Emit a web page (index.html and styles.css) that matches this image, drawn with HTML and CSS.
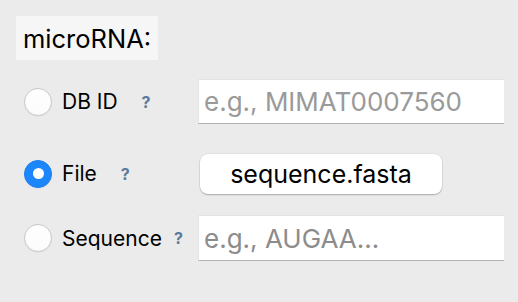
FILE: index.html
```html
<!DOCTYPE html>
<html>
<head>
<meta charset="utf-8">
<link rel="stylesheet" href="styles.css">
</head>
<body>
<div class="panel">
  <div class="title">microRNA:</div>
  <div class="row row-db">
    <div class="choice">
      <span class="radio"></span>
      <span class="label">DB ID</span>
      <span class="help">?</span>
    </div>
    <div class="input"><span class="placeholder">e.g., MIMAT0007560</span></div>
  </div>
  <div class="row row-file">
    <div class="choice">
      <span class="radio checked"></span>
      <span class="label">File</span>
      <span class="help">?</span>
    </div>
    <div class="button">sequence.fasta</div>
  </div>
  <div class="row row-seq">
    <div class="choice">
      <span class="radio"></span>
      <span class="label">Sequence</span>
      <span class="help tight">?</span>
    </div>
    <div class="input"><span class="placeholder">e.g., AUGAA...</span></div>
  </div>
</div>
</body>
</html>
```
FILE: styles.css
```css
html, body {
  margin: 0;
  padding: 0;
  background: #ebebeb;
}
body {
  width: 518px;
  height: 302px;
  overflow: hidden;
  font-family: Inter, "Liberation Sans", sans-serif;
  color: #000;
}
.panel {
  padding: 16px 0 0 0;
  display: flex;
  flex-direction: column;
}
.title {
  margin-left: 16px;
  width: 142px;
  height: 44px;
  box-sizing: border-box;
  padding-left: 7px;
  background: #f6f6f6;
  font-size: 25.5px;
  display: flex;
  align-items: center;
}
.row {
  display: flex;
  align-items: center;
}
.row-db { margin-top: 19px; height: 45px; }
.row-file { margin-top: 29px; height: 41px; }
.row-seq { margin-top: 21px; height: 46px; }
.choice {
  width: 174px;
  margin-left: 24px;
  display: flex;
  align-items: center;
}
.radio {
  width: 28px;
  height: 28px;
  box-sizing: border-box;
  border-radius: 50%;
  background: linear-gradient(#ffffff, #fbfbfb);
  border: 1px solid #c9c9c9;
  box-shadow: 0 0.5px 1px rgba(0,0,0,0.08);
  flex: none;
  display: flex;
  align-items: center;
  justify-content: center;
}
.radio.checked {
  background: #1c86fb;
  border: 1px solid #1a7ef0;
}
.radio.checked::after {
  content: "";
  width: 11px;
  height: 11px;
  border-radius: 50%;
  background: #fff;
}
.label {
  margin-left: 10px;
  font-size: 21px;
}
.help {
  margin-left: 24px;
  font-size: 16px;
  font-weight: 700;
  color: #5b7b9b;
}
.help.tight {
  margin-left: 12px;
}
.input {
  width: 306px;
  height: 45px;
  box-sizing: border-box;
  background: #fff;
  border-top: 1px solid #e4e4e4;
  border-left: 1px solid #e4e4e4;
  border-bottom: 1px solid #b3b3b3;
  display: flex;
  align-items: center;
  padding-left: 5px;
}
.row-seq .input { height: 46px; }
.placeholder {
  font-size: 26px;
  color: #9a9a9a;
}
.row-seq .placeholder {
  color: #8c8c8c;
}
.button {
  margin-left: 2px;
  width: 242px;
  height: 40px;
  box-sizing: border-box;
  background: #fff;
  border-radius: 8px;
  box-shadow: 0 1px 1.5px rgba(0,0,0,0.25), 0 0 0 0.5px rgba(0,0,0,0.08);
  display: flex;
  align-items: center;
  justify-content: center;
  font-size: 25px;
}
```
